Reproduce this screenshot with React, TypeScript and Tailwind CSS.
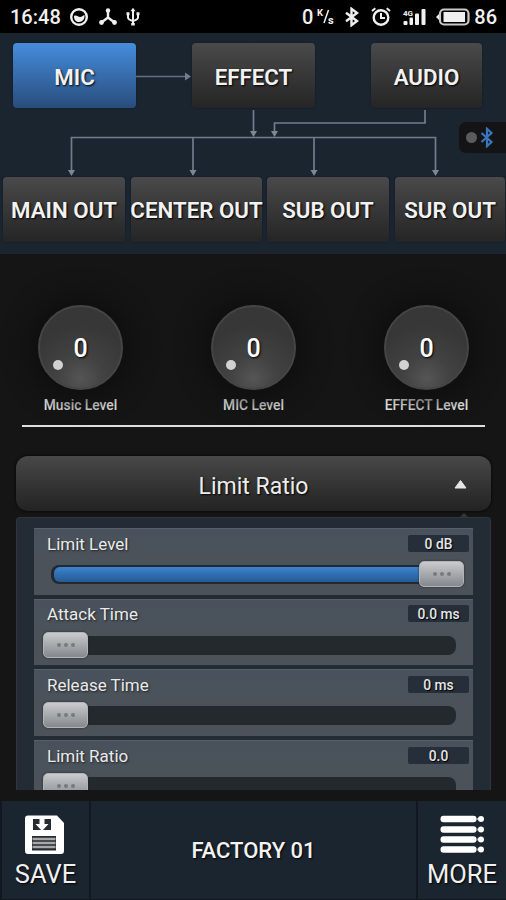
import type { ReactNode } from 'react'
import clsx from 'clsx'

function StatusBar() {
    return (
        <div className="flex h-[33px] items-center bg-black text-[20px] leading-none font-medium text-[#f0f0f0]">
            <span className="ml-[10px] w-[52px]">16:48</span>

            <svg className="ml-[7px] h-5 w-5" viewBox="0 0 20 20">
                <circle cx="10" cy="10" r="7.8" fill="none" stroke="#f0f0f0" strokeWidth="2.4" />
                <path d="M5 9c2.500-1.500 4 1 6 1s2.500-1.500 4.500-2c.5 4-2 7-5.500 7s-5-2.500-5-6z" fill="#f0f0f0" />
            </svg>
            <svg className="ml-[10px] h-5 w-5" viewBox="0 0 20 20" fill="#f0f0f0">
                <path d="M9 3.500V10.500L2.500 15.500M9 10.500l6.500 5" fill="none" stroke="#f0f0f0" strokeWidth="2.400" />
                <circle cx="9" cy="3.500" r="2.200" />
                <circle cx="2.500" cy="15.500" r="2.400" />
                <circle cx="15.500" cy="15.500" r="2.400" />
            </svg>
            <svg className="ml-[7px] h-5 w-[14px]" viewBox="0 0 14 20" fill="none" stroke="#f0f0f0" strokeWidth="2">
                <path d="M7 2v16M2 7v3.500Q2 12.500 7 14Q12 12.500 12 10.500V7" />
                <path d="M7 .8L4.500 4.300h5zM.5 5.300h3v3h-3zM10.500 5.300h3v3h-3zM5.200 16h3.600v2.500h-3.600z" fill="#f0f0f0" stroke="none" />
            </svg>

            <span className="ml-auto">0</span>
            <svg className="ml-[4px] h-5 w-[18px]" viewBox="0 0 18 20" fill="#f0f0f0">
                <text x="0" y="9" fontSize="9.500" fontWeight="700" fontFamily="Roboto, sans-serif">K</text>
                <text x="11" y="17" fontSize="11" fontWeight="700" fontFamily="Roboto, sans-serif">s</text>
                <path d="M11.500 3L7 16" stroke="#f0f0f0" strokeWidth="1.500" />
            </svg>
            <svg className="ml-[9px] h-5 w-[16px]" viewBox="0 0 16 20" fill="none" stroke="#f0f0f0" strokeWidth="2.400">
                <path d="M2 5.800l11 8.200-5.500 4.200V1.800L13 6 2 14.200" />
            </svg>
            <svg className="ml-[11px] h-5 w-5" viewBox="0 0 20 20" fill="none" stroke="#f0f0f0" strokeWidth="2.400">
                <circle cx="10" cy="10.500" r="7.300" />
                <path d="M10 6v5h4M1 4l3.300-2.700M19 4l-3.300-2.700" strokeWidth="2" />
            </svg>
            <svg className="ml-[11px] h-5 w-6" viewBox="0 0 24 20" fill="#f0f0f0">
                <text x="1" y="8.500" fontSize="8" fontWeight="700" fontFamily="Roboto, sans-serif">4G</text>
                <rect x="1.500" y="14" width="4" height="4" rx="1" />
                <rect x="7.500" y="10.500" width="3.500" height="7.500" rx="1" />
                <rect x="13" y="6.500" width="4" height="11.500" rx="1" />
                <rect x="19.500" y="2" width="4" height="16" rx="1" />
            </svg>
            <svg className="ml-[10px] h-5 w-[34px]" viewBox="0 0 34 20" fill="#f0f0f0">
                <rect x="4" y="2.500" width="28.500" height="15" rx="4" fill="none" stroke="#c8c8c8" strokeWidth="2.200" />
                <rect x="7.500" y="5" width="21.500" height="10" />
                <path d="M3 7L0 10l3 3z" />
            </svg>
            <span className="mr-[9px] ml-[4px]">86</span>
        </div>
    )
}

function RouteButton({ label, className, active }: { label: string; className?: string; active?: boolean }) {
    return (
        <button
            className={clsx(
                'flex h-[65px] shrink-0 items-center justify-center rounded-[4px] bg-linear-to-b text-[22.300px] font-semibold whitespace-nowrap text-[#f2f2f2] shadow-[0_0_2px_rgba(0,0,0,0.35)] [text-shadow:1px_1px_2px_#000]',
                active ? 'from-[#468ddd] to-[#284d7d]' : 'from-[#4a4a4a] to-[#252525]',
                className
            )}
        >
            {label}
        </button>
    )
}

function Wires() {
    const outputs = [71.5, 193, 314, 435.5]
    const arrows = [
        [253.5, 29],
        [274.5, 29],
        ...outputs.map((x) => [x, 68]),
    ]

    return (
        <svg className="block h-[69px] w-full" viewBox="0 0 506 69">
            <g fill="none" stroke="#727d88" strokeWidth="1.700">
                <path d="M253.500 2v23M425 2v13H274.500v10" />
                <path d="M71.500 64V29.500H435.500V64M193 29.500V64M314 29.500V64" />
            </g>
            {arrows.map(([x, y]) => (
                <path key={x} d={`M${x - 3.5} ${y - 6}h7l-3.500 6z`} fill="#7d8893" />
            ))}
        </svg>
    )
}

function Routing() {
    return (
        <section className="relative h-[221px] bg-[#1b2530] pt-[10px]">
            <div className="flex pl-[13px]">
                <RouteButton label="MIC" active className="w-[123px] pt-[5px]" />
                <svg className="h-[65px] w-[56px]" viewBox="0 0 56 65">
                    <path d="M0 33.500h50" stroke="#65707b" strokeWidth="1.700" />
                    <path d="M49 29.500v8l6-4z" fill="#727d88" />
                </svg>
                <RouteButton label="EFFECT" className="w-[123px] pt-[5px]" />
                <RouteButton label="AUDIO" className="ml-[56px] w-[111px] pt-[5px]" />
            </div>

            <Wires />

            <div className="flex pl-[3px]">
                <RouteButton label="MAIN OUT" className="w-[122px] pt-[3px]" />
                <RouteButton label="CENTER OUT" className="ml-[6px] w-[131px] pt-[3px]" />
                <RouteButton label="SUB OUT" className="ml-[5px] w-[122px] pt-[3px]" />
                <RouteButton label="SUR OUT" className="ml-[6px] w-[110px] pt-[3px]" />
            </div>

            {/* Bluetooth status tab on the right edge */}
            <div className="absolute top-[89px] right-0 flex h-[31px] w-[47px] items-center rounded-l-[7px] bg-[#141416] pl-[7px]">
                <span className="h-[11px] w-[11px] rounded-full bg-[#5b5b5b]" />
                <svg className="ml-[3px] h-[21px] w-[14px]" viewBox="0 0 14 21" fill="none" stroke="#3876be" strokeWidth="2.200">
                    <path d="M1.500 6l10 9-4.500 4.200V1.800L11.500 6l-10 9" />
                </svg>
            </div>
        </section>
    )
}

function Knob({ label, value }: { label: string; value: number }) {
    return (
        <div className="flex w-[173px] flex-col items-center">
            <div className="relative flex h-[85px] w-[85px] items-center justify-center rounded-full border-2 border-[#454545] bg-[radial-gradient(circle_at_50%_88%,#555_0%,#424242_28%,#373737_65%)] pt-[2px] text-[25px] font-medium text-white shadow-[0_0_24px_10px_#0f0f0f] [text-shadow:1px_1px_2px_#000]">
                {value}
                <span className="absolute top-[53px] left-[13px] h-[10px] w-[10px] rounded-full bg-[#d2d2d2]" />
            </div>
            <span className="mt-[6px] text-[13.800px] leading-[18px] font-medium text-[#e4e4e4]">{label}</span>
        </div>
    )
}

function Thumb({ className }: { className: string }) {
    return (
        <div
            className={clsx(
                'absolute top-[-4px] flex h-[26px] w-[45px] items-center justify-center gap-[3px] rounded-[5px] border border-[#b0b3b7] bg-linear-to-b from-[#c9cbce] to-[#85898d] shadow-[0_0_2px_#222]',
                className
            )}
        >
            <i className="h-1 w-1 rounded-full bg-[#777a7e]" />
            <i className="h-1 w-1 rounded-full bg-[#777a7e]" />
            <i className="h-1 w-1 rounded-full bg-[#777a7e]" />
        </div>
    )
}

function SliderRow({ label, value, full }: { label: string; value: string; full?: boolean }) {
    return (
        <div className="h-[66.500px] shrink-0 border-t border-[#566069] bg-linear-to-b from-[#49525c] to-[#4c5258] pt-[5px]">
            <div className="flex h-[18px] items-center justify-between pr-[4px] pl-[13px]">
                <span className="mt-px text-[17px] leading-5 text-[#e8eaec] [text-shadow:1px_1px_2px_#222]">{label}</span>
                <span className="flex h-[17px] w-[61px] items-center justify-center rounded-[2px] bg-[#262f39] pt-[3px] text-[13.800px] leading-none font-medium text-[#e4e6e8] [text-shadow:1px_1px_1px_#000]">
                    {value}
                </span>
            </div>
            <div className="relative mt-[13px] ml-[17px] h-[19px] w-[405px] rounded-[8px] bg-[#24292d] p-[2px]">
                {full && <div className="ml-px h-[15px] w-[385px] rounded-l-[6px] bg-linear-to-b from-[#3d82d2] to-[#235c93]" />}
                <Thumb className={full ? 'left-[368px]' : 'left-[-8px]'} />
            </div>
        </div>
    )
}

function LimitPanel() {
    const rows = [
        { label: 'Limit Level', value: '0 dB', full: true },
        { label: 'Attack Time', value: '0.0 ms' },
        { label: 'Release Time', value: '0 ms' },
        { label: 'Limit Ratio', value: '0.0' },
    ]

    return (
        <div className="relative mr-[15px] ml-4">
            <button className="relative flex h-[55px] w-full items-center justify-center rounded-[12px] bg-linear-to-b from-[#484848] to-[#232323] pt-[7px] text-[23px] text-[#ececec] shadow-[0_0_3px_#000] [text-shadow:1px_1px_2px_#000]">
                Limit Ratio
                <svg className="absolute top-[23px] right-[24px] h-[11px] w-[13px]" viewBox="0 0 13 11">
                    <path d="M6.500 1.500L12 9H1z" fill="#e6e6e6" stroke="#e6e6e6" strokeLinejoin="round" />
                </svg>
            </button>
            {/* Pointer of the opened panel */}
            <svg className="absolute top-[57px] right-[23px] h-[4px] w-[8px]" viewBox="0 0 8 4">
                <path d="M4 0l4 4H0z" fill="#30363b" />
            </svg>
            <div className="mt-[6px] flex h-[273px] flex-col gap-[4.200px] overflow-hidden rounded-t-[4px] border-x border-t border-[#30363b] bg-[#232c34] px-[17px] pt-[10px]">
                {rows.map((row) => (
                    <SliderRow key={row.label} {...row} />
                ))}
            </div>
        </div>
    )
}

function FooterButton({ icon, label, className }: { icon: ReactNode; label: string; className: string }) {
    return (
        <button className={clsx('flex flex-col items-center bg-[#1b2530] pt-[13px] text-[25.500px] leading-[30px] text-[#f0f0f0] [text-shadow:1px_1px_2px_#000]', className)}>
            {icon}
            <span className="mt-[3px]">{label}</span>
        </button>
    )
}

function SaveIcon() {
    return (
        <svg className="mr-[2px] h-[42px] w-[42px]" viewBox="0 0 42 42">
            <path d="M4 1.500h29l7 7.500V37a3 3 0 0 1-3 3H4a3 3 0 0 1-3-3V4.500a3 3 0 0 1 3-3z" fill="#fff" />
            <path d="M9 5h18v11H9z" fill="#272c31" />
            <path d="M15.500 4h5v6h4L18 17l-6.500-7h4z" fill="#fff" />
            <path d="M8 22h24v14.500H8z" fill="#272c31" />
            <path d="M8.500 25h23M8.500 29h23M8.500 33h23" stroke="#a6a9ac" strokeWidth="2.400" />
        </svg>
    )
}

function MoreIcon() {
    return (
        <svg className="h-[42px] w-[46px]" viewBox="0 0 46 42" fill="#fff">
            {[5, 15.5, 25.5, 35.5].map((y) => (
                <g key={y}>
                    <rect x="1.500" y={y - 3.3} width="36" height="6.600" rx="3" />
                    <rect x="37" y={y - 1} width="4" height="2" fill="#9a9ea3" />
                    <circle cx="42" cy={y} r="3" />
                </g>
            ))}
        </svg>
    )
}

export default function App() {
    return (
        <main className="flex h-[900px] w-[506px] flex-col overflow-hidden bg-[#151515] font-['Roboto',sans-serif]">
            <StatusBar />
            <Routing />

            <section className="h-[202px] pt-[51px]">
                <div className="-ml-[6px] flex w-[519px]">
                    <Knob label="Music Level" value={0} />
                    <Knob label="MIC Level" value={0} />
                    <Knob label="EFFECT Level" value={0} />
                </div>
                <div className="mt-[11px] ml-[22px] h-[2px] w-[463px] bg-[#dedede]" />
            </section>

            <LimitPanel />

            <footer className="mt-[11px] flex h-[99px] gap-[2px] bg-[#121820] pb-px pl-[2px]">
                <FooterButton className="w-[87px]" icon={<SaveIcon />} label="SAVE" />
                <div className="flex flex-1 items-center justify-center bg-[#1b2530] text-[22px] font-medium text-[#f2f2f2] [text-shadow:1px_1px_2px_#000]">
                    FACTORY 01
                </div>
                <FooterButton className="w-[88px]" icon={<MoreIcon />} label="MORE" />
            </footer>
        </main>
    )
}
